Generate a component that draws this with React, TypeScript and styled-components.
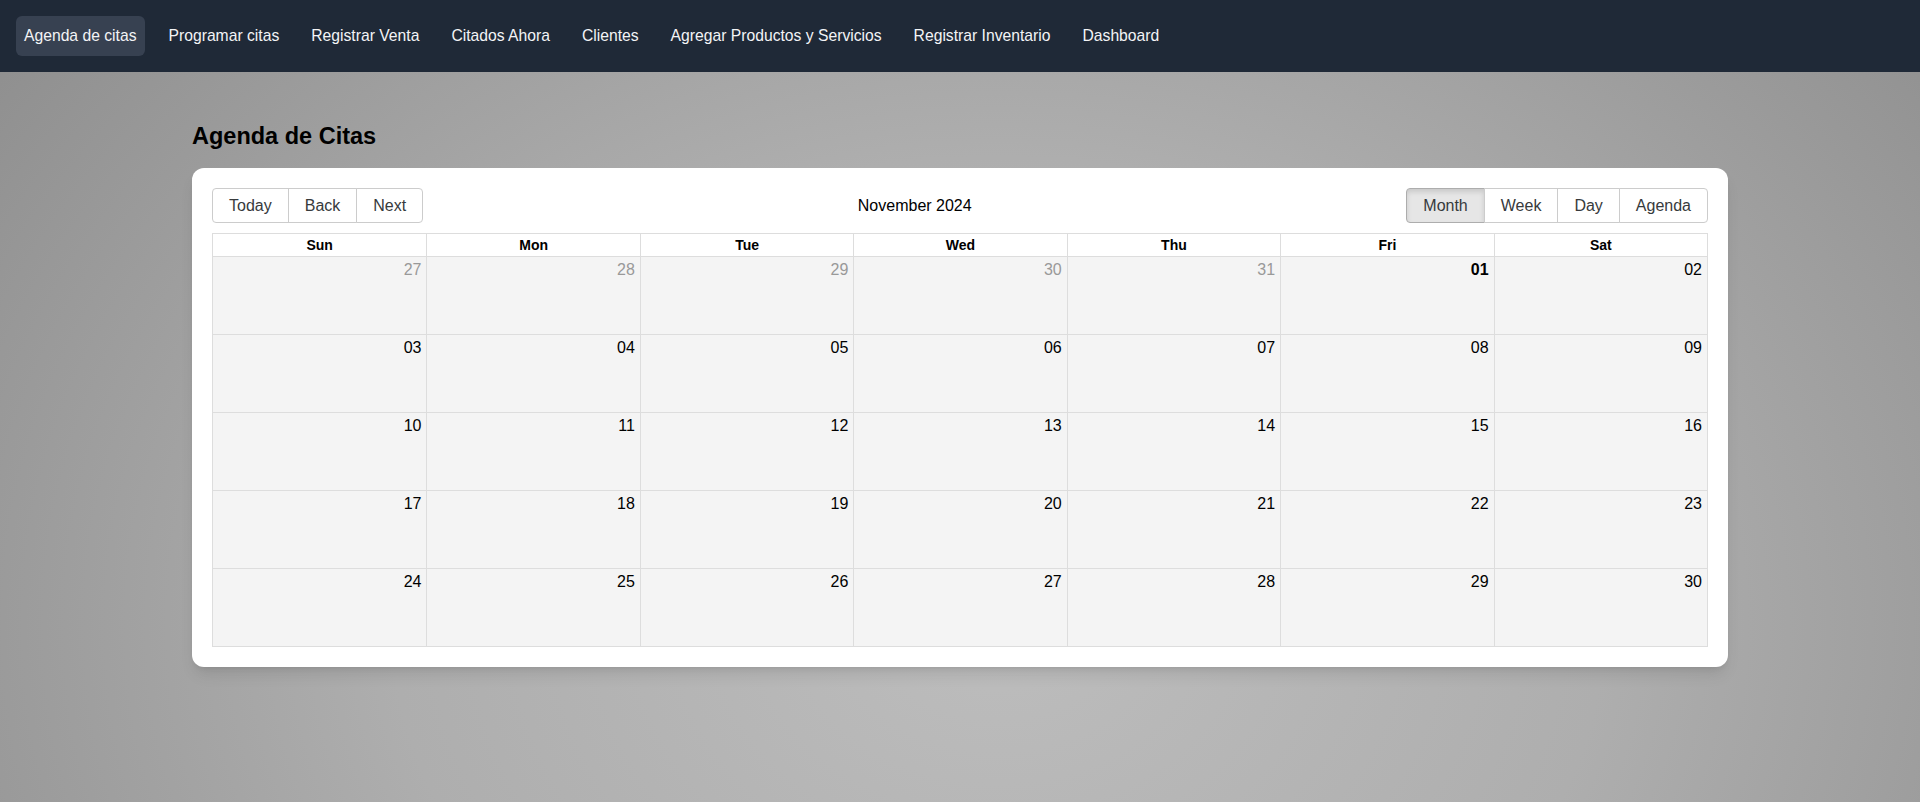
import React from "react";
import styled, { createGlobalStyle } from "styled-components";

const Global = createGlobalStyle`
  html, body { margin: 0; padding: 0; }
  body {
    font-family: "Liberation Sans", Arial, sans-serif;
    min-height: 802px;
    background: radial-gradient(ellipse 70% 130% at 52% 78%, #bdbdbd 0%, #aeaeae 45%, #8a8a8a 100%);
  }
  * { box-sizing: border-box; }
`;

const Page = styled.div`
  min-height: 802px;
`;

const Nav = styled.nav`
  background: #1f2937;
  padding: 16px;
  display: flex;
  gap: 16px;
  align-items: center;
`;

const NavItem = styled.a<{ $active?: boolean }>`
  display: block;
  padding: 8px;
  border-radius: 6px;
  color: #f3f4f6;
  font-size: 15.7px;
  line-height: 24px;
  text-decoration: none;
  background: ${(p) => (p.$active ? "#374151" : "transparent")};
`;

const Main = styled.main`
  max-width: 1536px;
  margin: 0 auto;
  padding-top: 48px;
`;

const Title = styled.h1`
  margin: 0 0 16px;
  font-size: 23.5px;
  line-height: 32px;
  font-weight: 700;
  color: #000;
`;

const Card = styled.div`
  background: #fff;
  border-radius: 12px;
  padding: 20px;
  box-shadow: 0 10px 15px -3px rgba(0, 0, 0, 0.1), 0 4px 6px -4px rgba(0, 0, 0, 0.1);
`;

const Toolbar = styled.div`
  display: flex;
  align-items: center;
  margin-bottom: 10px;
  font-size: 16px;
`;

const BtnGroup = styled.div`
  display: flex;
`;

const Btn = styled.button<{ $active?: boolean; $first?: boolean; $last?: boolean }>`
  font-family: inherit;
  font-size: 16px;
  line-height: 21px;
  color: #373a3c;
  padding: 6px 16px;
  margin: 0;
  border: 1px solid #ccc;
  margin-left: ${(p) => (p.$first ? "0" : "-1px")};
  border-radius: ${(p) => (p.$first ? "4px 0 0 4px" : p.$last ? "0 4px 4px 0" : "0")};
  background: ${(p) => (p.$active ? "#e6e6e6" : "#fff")};
  box-shadow: ${(p) => (p.$active ? "inset 0 3px 5px rgba(0,0,0,0.125)" : "none")};
  border-color: ${(p) => (p.$active ? "#adadad" : "#ccc")};
  cursor: pointer;
`;

const Label = styled.span`
  flex: 1;
  text-align: center;
  color: #000;
  padding-top: 1px;
`;

const Month = styled.div`
  height: 414px;
  border: 1px solid #ddd;
  display: flex;
  flex-direction: column;
`;

const HeaderRow = styled.div`
  display: grid;
  grid-template-columns: repeat(7, 1fr);
  border-bottom: 1px solid #ddd;
`;

const HeaderCell = styled.div`
  text-align: center;
  font-weight: 700;
  font-size: 14px;
  line-height: 22px;
  color: #000;
  & + & { border-left: 1px solid #ddd; }
`;

const WeekRow = styled.div`
  flex: 1;
  display: grid;
  grid-template-columns: repeat(7, 1fr);
  & + & { border-top: 1px solid #ddd; }
`;

const DayCell = styled.div<{ $off?: boolean; $now?: boolean }>`
  background: #f4f4f4;
  text-align: right;
  padding: 3px 5px 0 0;
  font-size: 16px;
  line-height: 20px;
  color: ${(p) => (p.$off ? "#999" : "#000")};
  font-weight: ${(p) => (p.$now ? 700 : 400)};
  & + & { border-left: 1px solid #ddd; }
`;

const navItems = [
  "Agenda de citas",
  "Programar citas",
  "Registrar Venta",
  "Citados Ahora",
  "Clientes",
  "Agregar Productos y Servicios",
  "Registrar Inventario",
  "Dashboard",
];

const days = ["Sun", "Mon", "Tue", "Wed", "Thu", "Fri", "Sat"];

type Day = { n: number; off: boolean };
const weeks: Day[][] = (() => {
  const out: Day[][] = [];
  const first: Day[] = [27, 28, 29, 30, 31].map((n) => ({ n, off: true }));
  first.push({ n: 1, off: false }, { n: 2, off: false });
  out.push(first);
  let d = 3;
  for (let w = 0; w < 4; w++) {
    const row: Day[] = [];
    for (let i = 0; i < 7; i++) row.push({ n: d++, off: false });
    out.push(row);
  }
  return out;
})();

const pad = (n: number) => (n < 10 ? "0" + n : String(n));

export default function App() {
  return (
    <Page>
      <Global />
      <Nav>
        {navItems.map((t, i) => (
          <NavItem key={t} $active={i === 0} href="#">
            {t}
          </NavItem>
        ))}
      </Nav>
      <Main>
        <Title>Agenda de Citas</Title>
        <Card>
          <Toolbar>
            <BtnGroup>
              <Btn $first>Today</Btn>
              <Btn>Back</Btn>
              <Btn $last>Next</Btn>
            </BtnGroup>
            <Label>November 2024</Label>
            <BtnGroup>
              <Btn $first $active>Month</Btn>
              <Btn>Week</Btn>
              <Btn>Day</Btn>
              <Btn $last>Agenda</Btn>
            </BtnGroup>
          </Toolbar>
          <Month>
            <HeaderRow>
              {days.map((d) => (
                <HeaderCell key={d}>{d}</HeaderCell>
              ))}
            </HeaderRow>
            {weeks.map((w, wi) => (
              <WeekRow key={wi}>
                {w.map((d, di) => (
                  <DayCell key={di} $off={d.off} $now={!d.off && d.n === 1 && wi === 0}>
                    {pad(d.n)}
                  </DayCell>
                ))}
              </WeekRow>
            ))}
          </Month>
        </Card>
      </Main>
    </Page>
  );
}
